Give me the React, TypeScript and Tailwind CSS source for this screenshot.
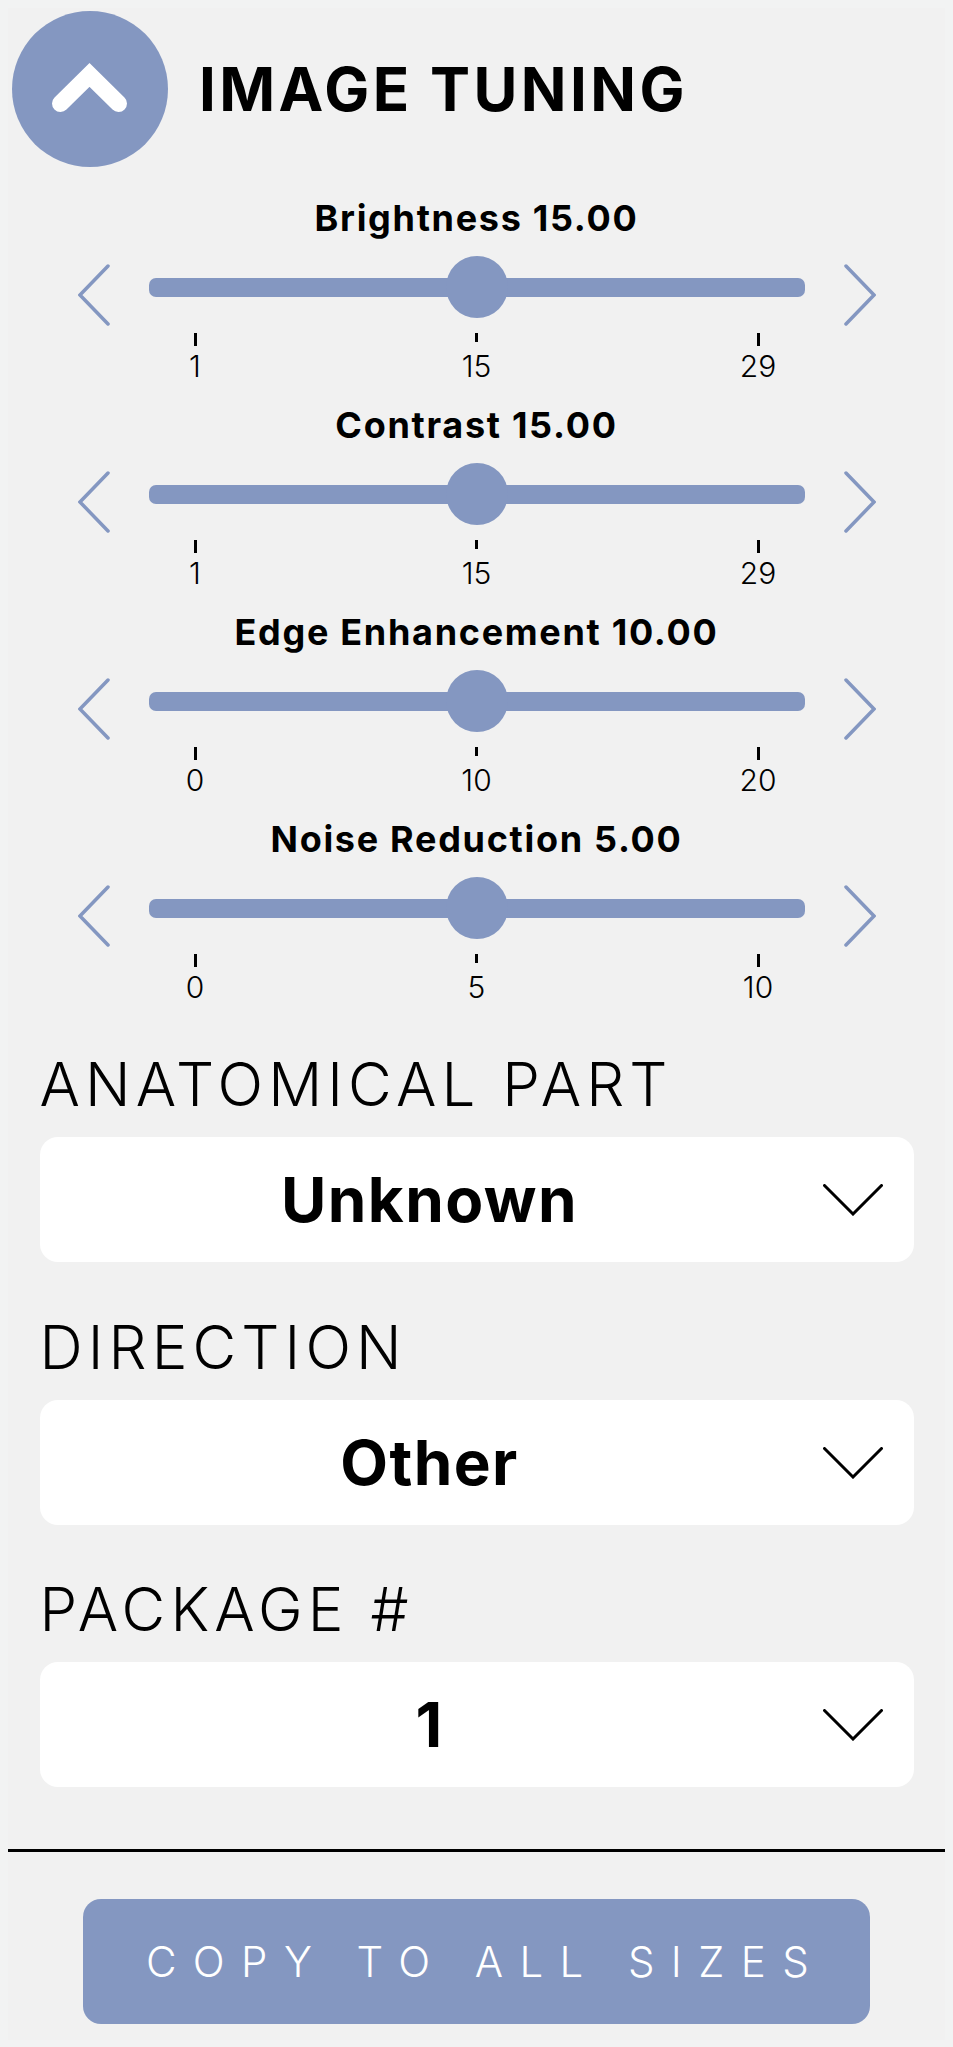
const BLUE = "bg-[#8497c1]";

function Chevron({ dir }: { dir: "left" | "right" }) {
  return (
    <svg viewBox="0 0 32 62" className="w-8 h-[62px] shrink-0" fill="none" stroke="#8497c1" strokeWidth="3.5" strokeLinecap="round">
      <path d={dir === "left" ? "M30 2L2 31L30 60" : "M2 2L30 31L2 60"} />
    </svg>
  );
}

function Tuner({ label, ticks }: { label: string; ticks: string[] }) {
  return (
    <div className="h-[207px]">
      <div className="text-center text-[36px] leading-[40px] font-bold tracking-[1.7px]">{label}</div>
      <div className="flex items-start mt-[18px] pl-[70px]">
        <div className="pt-[8px]">
          <Chevron dir="left" />
        </div>
        <div className="w-[656px] ml-[39px] mr-[39px]">
          <div className="relative h-[62px] flex items-center">
            <div className={`w-full h-[19px] rounded-[7px] ${BLUE}`} />
            <div className={`absolute left-[297px] top-0 w-[62px] h-[62px] rounded-full ${BLUE}`} />
          </div>
          <div className="flex justify-between pl-[26px] pr-[27px] mt-[15px]">
            {ticks.map((t, i) => (
              <div key={i} className="w-[40px] flex flex-col items-center">
                <div className={`w-[3px] bg-black ${i === 1 ? "h-[9px] mb-[4px]" : "h-[13px]"}`} />
                <div className="text-[30px] leading-[36px] font-light mt-[2px]">{t}</div>
              </div>
            ))}
          </div>
        </div>
        <div className="pt-[8px]">
          <Chevron dir="right" />
        </div>
      </div>
    </div>
  );
}

function Picker({ label, value }: { label: string; value: string }) {
  return (
    <div className="h-[262.5px]">
      <div className="text-[60px] leading-[72px] font-light tracking-[5.1px]">{label}</div>
      <div className="relative mt-[17px] h-[125px] rounded-[18px] bg-white flex items-center justify-center pr-[94px]">
        <span className="text-[62px] font-bold tracking-[1.4px]">{value}</span>
        <svg viewBox="0 0 60 32" className="absolute right-[31px] top-[47px] w-[60px] h-[32px]" fill="none" stroke="black" strokeWidth="3" strokeLinecap="round">
          <path d="M1.5 1.5L30 30L58.5 1.5" />
        </svg>
      </div>
    </div>
  );
}

export default function App() {
  return (
    <div className="min-h-[2047px] w-[953px] bg-[#f2f3f3] p-[8px] text-black font-['Inter',sans-serif]">
      <div className="h-[2032px] bg-[#f1f1f1]">
        <div className="flex items-center pt-[3px] pl-[3.5px]">
          <button className={`w-[156px] h-[156px] rounded-full ${BLUE} flex items-center justify-center`}>
            <svg viewBox="0 0 75 50" className="w-[75px] h-[50px] mb-[2px]" fill="none" stroke="white" strokeWidth="17" strokeLinecap="round" strokeLinejoin="miter">
              <path d="M8.5 40.5L37.5 12L66.5 40.5" />
            </svg>
          </button>
          <h1 className="ml-[31.5px] text-[60px] font-bold tracking-[3.4px]">IMAGE TUNING</h1>
        </div>
        <div className="mt-[31px]">
          <Tuner label="Brightness 15.00" ticks={["1", "15", "29"]} />
          <Tuner label="Contrast 15.00" ticks={["1", "15", "29"]} />
          <Tuner label="Edge Enhancement 10.00" ticks={["0", "10", "20"]} />
          <Tuner label="Noise Reduction 5.00" ticks={["0", "5", "10"]} />
        </div>
        <div className="px-[31.5px] mt-[22px]">
          <Picker label="ANATOMICAL PART" value="Unknown" />
          <Picker label="DIRECTION" value="Other" />
          <Picker label="PACKAGE #" value="1" />
        </div>
        <div className="h-[3px] bg-black mt-[13px]" />
        <button className={`block mx-auto mt-[47px] w-[787px] h-[125px] rounded-[18px] pl-[18px] ${BLUE} text-white text-[42px] font-light tracking-[16.4px]`}>
          COPY TO ALL SIZES
        </button>
      </div>
    </div>
  );
}
